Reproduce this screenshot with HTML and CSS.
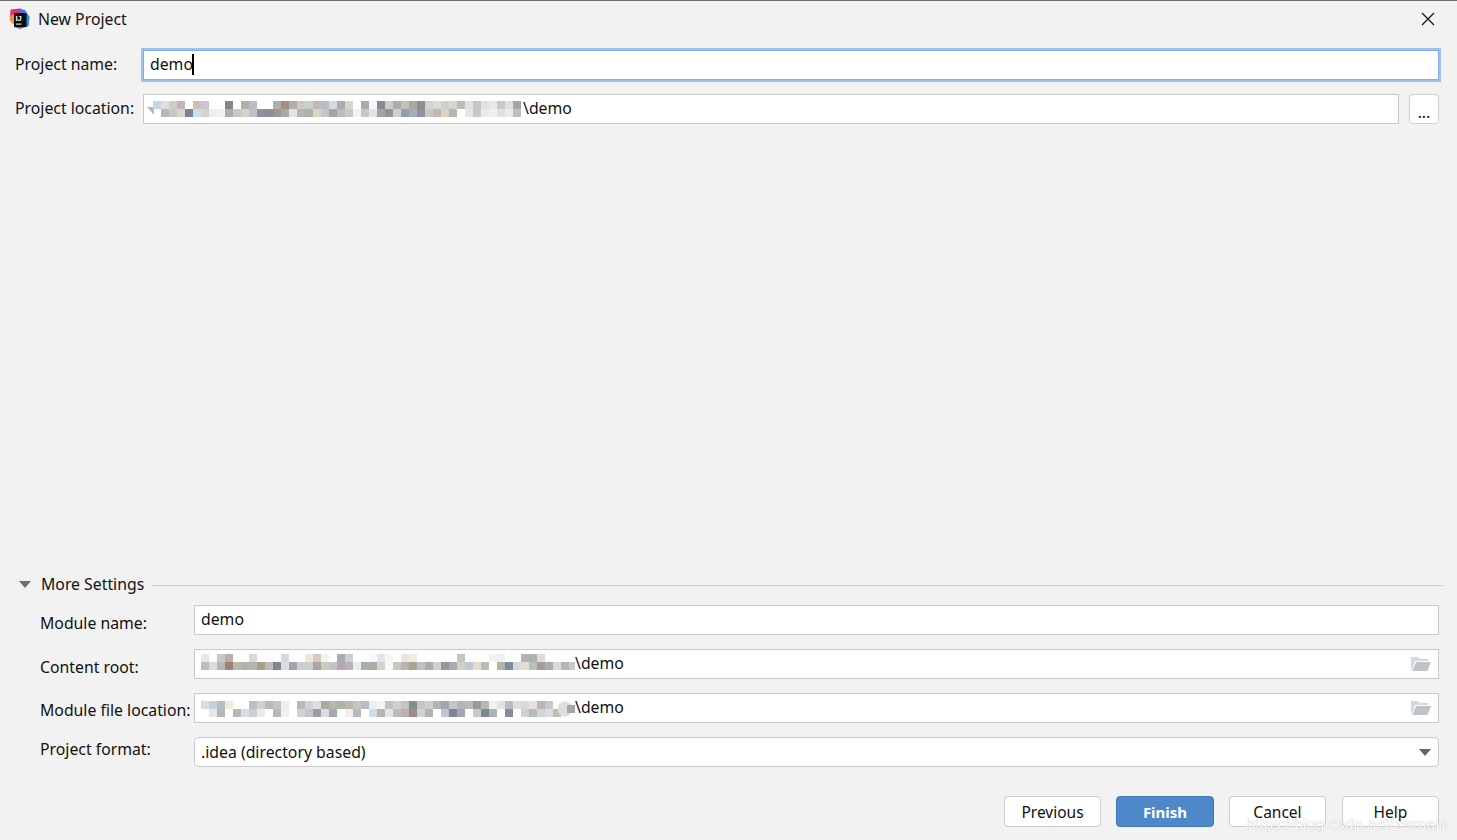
FILE: index.html
```html
<!DOCTYPE html>
<html lang="en">
<head>
<meta charset="utf-8">
<title>New Project</title>
<link rel="stylesheet" href="styles.css">
</head>
<body>
<div class="dialog">
  <header class="titlebar">
    <svg class="app-icon" width="22" height="22" viewBox="0 0 22 22">
      <path d="M2.500 1.500 L13 0.500 L15 8 L6 15 L2 12 Z" fill="#ee2a62"/>
      <path d="M1.500 8 L7 6 L8 17 L3.500 15 Z" fill="#f7931e"/>
      <path d="M10 0.500 L17 2 L21.500 9 L20.500 18 L12 21 L6 19 L12 8 Z" fill="#5b5ff2"/>
      <path d="M16 2 L21.500 9 L20.500 18 L16 19 Z" fill="#2f8ae8"/>
      <rect x="6" y="5" width="12.500" height="14" fill="#0b0b10"/>
      <text class="app-icon-text" x="7.500" y="12.500">IJ</text>
      <rect x="8" y="15.500" width="5.500" height="1.200" fill="#d8d8d8"/>
    </svg>
    <span class="title">New Project</span>
    <svg class="close" width="14" height="14" viewBox="0 0 14 14"><path d="M1 1 L13 13 M13 1 L1 13" stroke="#1c1c1c" stroke-width="1.400" fill="none"/></svg>
  </header>

  <section class="primary">
    <label class="label label-up">Project name:</label>
    <div class="field field-focus">demo<span class="caret"></span></div>
    <label class="label label-up">Project location:</label>
    <div class="location">
      <div class="field field-masked-top">
        <svg class="mosaic" width="376" height="28" viewBox="0 0 376 28">
          <path d="M0 12 L7 12 L7 20 Z" fill="#b5b5b5"/>
          <rect class="px" x="6" y="6" fill="#c5d6e4"/><rect class="px" x="14" y="6" fill="#dde0e6"/><rect class="px" x="22" y="6" fill="#cfcfca"/><rect class="px" x="30" y="6" fill="#c2b5b3"/><rect class="px" x="46" y="6" fill="#cdbfb7"/><rect class="px" x="54" y="6" fill="#c7c6d4"/><rect class="px" x="78" y="6" fill="#888384"/><rect class="px" x="94" y="6" fill="#b1aeaa"/><rect class="px" x="102" y="6" fill="#bfbcc3"/><rect class="px" x="126" y="6" fill="#abb2ae"/><rect class="px" x="134" y="6" fill="#a58f80"/><rect class="px" x="142" y="6" fill="#b5afa7"/><rect class="px" x="150" y="6" fill="#ccc9c3"/><rect class="px" x="158" y="6" fill="#ccd0cc"/><rect class="px" x="166" y="6" fill="#c2b9b2"/><rect class="px" x="174" y="6" fill="#b5bdc3"/><rect class="px" x="182" y="6" fill="#d1dbe3"/><rect class="px" x="190" y="6" fill="#a9adb5"/><rect class="px" x="198" y="6" fill="#d9d5d0"/><rect class="px" x="214" y="6" fill="#a9a9ae"/><rect class="px" x="222" y="6" fill="#f4f6fb"/><rect class="px" x="230" y="6" fill="#8b888f"/><rect class="px" x="238" y="6" fill="#cacacc"/><rect class="px" x="246" y="6" fill="#aeaaa8"/><rect class="px" x="254" y="6" fill="#c3bfba"/><rect class="px" x="262" y="6" fill="#aaa7a2"/><rect class="px" x="270" y="6" fill="#8f8e8b"/><rect class="px" x="278" y="6" fill="#d2d2ca"/><rect class="px" x="286" y="6" fill="#dddcd6"/><rect class="px" x="294" y="6" fill="#cfcfcc"/><rect class="px" x="302" y="6" fill="#d8d4d0"/><rect class="px" x="310" y="6" fill="#bcbcbb"/><rect class="px" x="318" y="6" fill="#dde1e5"/><rect class="px" x="326" y="6" fill="#c5c8c9"/><rect class="px" x="334" y="6" fill="#dfe2de"/><rect class="px" x="342" y="6" fill="#e8e8e8"/><rect class="px" x="350" y="6" fill="#c8c8c8"/><rect class="px" x="358" y="6" fill="#dfe2de"/><rect class="px" x="366" y="6" fill="#a8a5a2"/>
          <rect class="px" x="14" y="14" fill="#b9b8b6"/><rect class="px" x="22" y="14" fill="#c8c9c5"/><rect class="px" x="30" y="14" fill="#d6d6d0"/><rect class="px" x="38" y="14" fill="#77838f"/><rect class="px" x="46" y="14" fill="#cfdde8"/><rect class="px" x="54" y="14" fill="#d2d1cc"/><rect class="px" x="62" y="14" fill="#eceef0"/><rect class="px" x="70" y="14" fill="#f2f2ee"/><rect class="px" x="78" y="14" fill="#a9aeb3"/><rect class="px" x="86" y="14" fill="#c9c8c5"/><rect class="px" x="94" y="14" fill="#d9d2ca"/><rect class="px" x="102" y="14" fill="#bcc2c9"/><rect class="px" x="110" y="14" fill="#8e939f"/><rect class="px" x="118" y="14" fill="#8f8e8f"/><rect class="px" x="126" y="14" fill="#a1978f"/><rect class="px" x="134" y="14" fill="#a6a8ac"/><rect class="px" x="142" y="14" fill="#e3e3ea"/><rect class="px" x="150" y="14" fill="#b7b4b4"/><rect class="px" x="158" y="14" fill="#aeb0ae"/><rect class="px" x="166" y="14" fill="#ddd3c3"/><rect class="px" x="174" y="14" fill="#c4c8cb"/><rect class="px" x="182" y="14" fill="#a6a3a3"/><rect class="px" x="190" y="14" fill="#bdbcb5"/><rect class="px" x="198" y="14" fill="#c9c8c2"/><rect class="px" x="206" y="14" fill="#f2f2f2"/><rect class="px" x="214" y="14" fill="#c6c6c6"/><rect class="px" x="222" y="14" fill="#e4e4e4"/><rect class="px" x="230" y="14" fill="#a8a29f"/><rect class="px" x="238" y="14" fill="#9b938a"/><rect class="px" x="246" y="14" fill="#cdd1d2"/><rect class="px" x="254" y="14" fill="#8f9fae"/><rect class="px" x="262" y="14" fill="#a8adb5"/><rect class="px" x="270" y="14" fill="#8f93a8"/><rect class="px" x="278" y="14" fill="#c9c8c3"/><rect class="px" x="286" y="14" fill="#bcb9bc"/><rect class="px" x="294" y="14" fill="#dfcfc0"/><rect class="px" x="302" y="14" fill="#b9b5ae"/><rect class="px" x="318" y="14" fill="#e6e6e6"/><rect class="px" x="326" y="14" fill="#c9c7bf"/><rect class="px" x="334" y="14" fill="#e8ece8"/><rect class="px" x="342" y="14" fill="#f0f0f0"/><rect class="px" x="350" y="14" fill="#e0e0e0"/><rect class="px" x="358" y="14" fill="#e8ece8"/><rect class="px" x="366" y="14" fill="#c0bfbf"/>
        </svg><span>\demo</span>
      </div>
      <button class="browse" type="button">...</button>
    </div>
  </section>

  <section class="settings">
    <div class="settings-head">
      <svg class="disclosure" width="12" height="8" viewBox="0 0 12 8"><path d="M0 0 H12 L6 7 Z" fill="#6f6f6f"/></svg>
      <span>More Settings</span>
      <span class="rule"></span>
    </div>
    <div class="settings-grid">
      <label class="label label-low">Module name:</label>
      <div class="field field-raised">demo</div>
      <label class="label label-low">Content root:</label>
      <div class="field field-masked field-raised">
        <svg class="mosaic" width="376" height="28" viewBox="0 0 376 28">
          <rect class="px" x="2" y="4" fill="#e5e8ea"/><rect class="px" x="18" y="4" fill="#c9c8c6"/><rect class="px" x="26" y="4" fill="#b8aeaa"/><rect class="px" x="50" y="4" fill="#d5dad8"/><rect class="px" x="82" y="4" fill="#d8d8e0"/><rect class="px" x="106" y="4" fill="#f0e6da"/><rect class="px" x="114" y="4" fill="#d6cac2"/><rect class="px" x="122" y="4" fill="#f7f2ec"/><rect class="px" x="138" y="4" fill="#a9adb5"/><rect class="px" x="146" y="4" fill="#d0d0d0"/><rect class="px" x="170" y="4" fill="#f5f8fc"/><rect class="px" x="178" y="4" fill="#dde6f0"/><rect class="px" x="186" y="4" fill="#f8f6f0"/><rect class="px" x="202" y="4" fill="#e8e4e0"/><rect class="px" x="210" y="4" fill="#f0ebe0"/><rect class="px" x="258" y="4" fill="#c9c4c0"/><rect class="px" x="290" y="4" fill="#f5f0ea"/><rect class="px" x="298" y="4" fill="#eff0f2"/><rect class="px" x="322" y="4" fill="#b5b5b9"/><rect class="px" x="330" y="4" fill="#b3b0a9"/><rect class="px" x="338" y="4" fill="#dedcd7"/>
          <rect class="px" x="2" y="12" fill="#c0bcb8"/><rect class="px" x="10" y="12" fill="#dcdcdc"/><rect class="px" x="18" y="12" fill="#b9b7b4"/><rect class="px" x="26" y="12" fill="#9f8075"/><rect class="px" x="34" y="12" fill="#bbb8b2"/><rect class="px" x="42" y="12" fill="#b3b0ac"/><rect class="px" x="50" y="12" fill="#b5b5b0"/><rect class="px" x="58" y="12" fill="#a99e85"/><rect class="px" x="66" y="12" fill="#b9bcc0"/><rect class="px" x="74" y="12" fill="#7d858f"/><rect class="px" x="82" y="12" fill="#dbe0dd"/><rect class="px" x="90" y="12" fill="#a3a3b0"/><rect class="px" x="98" y="12" fill="#c8ced6"/><rect class="px" x="106" y="12" fill="#cbd0cf"/><rect class="px" x="114" y="12" fill="#a8a7a3"/><rect class="px" x="122" y="12" fill="#cbcbc6"/><rect class="px" x="130" y="12" fill="#c2c3c7"/><rect class="px" x="138" y="12" fill="#b8a8ad"/><rect class="px" x="146" y="12" fill="#b3b4b7"/><rect class="px" x="154" y="12" fill="#eaeee8"/><rect class="px" x="162" y="12" fill="#a6adaf"/><rect class="px" x="170" y="12" fill="#aeaba6"/><rect class="px" x="178" y="12" fill="#d4d3cd"/><rect class="px" x="186" y="12" fill="#fdfbf0"/><rect class="px" x="194" y="12" fill="#c8c5c5"/><rect class="px" x="202" y="12" fill="#b9b5ae"/><rect class="px" x="210" y="12" fill="#a5a694"/><rect class="px" x="218" y="12" fill="#bcc2c7"/><rect class="px" x="226" y="12" fill="#abaeb0"/><rect class="px" x="234" y="12" fill="#cdd0d4"/><rect class="px" x="242" y="12" fill="#9a9698"/><rect class="px" x="250" y="12" fill="#aaaab0"/><rect class="px" x="258" y="12" fill="#ccd2c8"/><rect class="px" x="266" y="12" fill="#c3c9d1"/><rect class="px" x="274" y="12" fill="#e8dcc9"/><rect class="px" x="282" y="12" fill="#bcbcb4"/><rect class="px" x="298" y="12" fill="#b2b3a3"/><rect class="px" x="306" y="12" fill="#7c8c9c"/><rect class="px" x="314" y="12" fill="#d8d8d8"/><rect class="px" x="322" y="12" fill="#e2dfd2"/><rect class="px" x="330" y="12" fill="#b8c0c4"/><rect class="px" x="338" y="12" fill="#a89c98"/><rect class="px" x="346" y="12" fill="#a9acb5"/><rect class="px" x="354" y="12" fill="#dadada"/><rect class="px" x="362" y="12" fill="#b5b5b5"/><rect class="px" x="370" y="12" fill="#c9c9cb"/>
        </svg><span>\demo</span>
        <svg class="folder" width="20" height="14" viewBox="0 0 20 14"><path d="M0 13 V0 H7 L9 2 H17 V4 H4 L1 13 Z" fill="#d3d8dc"/><path d="M5 5 H20 L16.500 14 H1.500 Z" fill="#bcc4ca"/></svg>
      </div>
      <label class="label label-low-small">Module file location:</label>
      <div class="field field-masked field-raised">
        <svg class="mosaic" width="376" height="28" viewBox="0 0 376 28">
          <rect class="px" x="2" y="7" fill="#d8dbe0"/><rect class="px" x="10" y="7" fill="#c5d2dc"/><rect class="px" x="18" y="7" fill="#b8bdc0"/><rect class="px" x="26" y="7" fill="#f5ead9"/><rect class="px" x="50" y="7" fill="#b9c1c4"/><rect class="px" x="58" y="7" fill="#ced0d3"/><rect class="px" x="66" y="7" fill="#b5bbb8"/><rect class="px" x="74" y="7" fill="#c3c7c4"/><rect class="px" x="82" y="7" fill="#f2ece8"/><rect class="px" x="98" y="7" fill="#c0b5b5"/><rect class="px" x="106" y="7" fill="#d0d0d5"/><rect class="px" x="114" y="7" fill="#dcdce4"/><rect class="px" x="122" y="7" fill="#aaa89f"/><rect class="px" x="130" y="7" fill="#b6b8b0"/><rect class="px" x="138" y="7" fill="#a9b3a9"/><rect class="px" x="146" y="7" fill="#bfb5ab"/><rect class="px" x="154" y="7" fill="#cac2bd"/><rect class="px" x="162" y="7" fill="#babcc4"/><rect class="px" x="170" y="7" fill="#e8eef5"/><rect class="px" x="178" y="7" fill="#f6f4ee"/><rect class="px" x="186" y="7" fill="#c2c2c6"/><rect class="px" x="194" y="7" fill="#d0d0d0"/><rect class="px" x="202" y="7" fill="#c5c5b8"/><rect class="px" x="210" y="7" fill="#7f8f8e"/><rect class="px" x="218" y="7" fill="#c5c5c5"/><rect class="px" x="226" y="7" fill="#cfcfd0"/><rect class="px" x="234" y="7" fill="#b0b3b5"/><rect class="px" x="242" y="7" fill="#a3a5a8"/><rect class="px" x="250" y="7" fill="#c4c6cc"/><rect class="px" x="258" y="7" fill="#b3b5b5"/><rect class="px" x="266" y="7" fill="#bcbab3"/><rect class="px" x="274" y="7" fill="#9a9996"/><rect class="px" x="282" y="7" fill="#b5b9b4"/><rect class="px" x="290" y="7" fill="#f0f0f0"/><rect class="px" x="298" y="7" fill="#e0e4e6"/><rect class="px" x="306" y="7" fill="#c0bbb7"/><rect class="px" x="314" y="7" fill="#dedede"/><rect class="px" x="322" y="7" fill="#dadada"/><rect class="px" x="330" y="7" fill="#e5e0dc"/><rect class="px" x="338" y="7" fill="#b9b6b6"/><rect class="px" x="346" y="7" fill="#c8c8c8"/>
          <rect class="px" x="10" y="15" fill="#e8e8e4"/><rect class="px" x="18" y="15" fill="#b5b8ba"/><rect class="px" x="34" y="15" fill="#b9b9b9"/><rect class="px" x="42" y="15" fill="#d0e0ec"/><rect class="px" x="50" y="15" fill="#cdcdca"/><rect class="px" x="58" y="15" fill="#e8ecee"/><rect class="px" x="74" y="15" fill="#b9b9b9"/><rect class="px" x="82" y="15" fill="#f0f0f0"/><rect class="px" x="98" y="15" fill="#d2d2d4"/><rect class="px" x="106" y="15" fill="#c5c5c9"/><rect class="px" x="114" y="15" fill="#9a9ea9"/><rect class="px" x="122" y="15" fill="#dcdcdc"/><rect class="px" x="130" y="15" fill="#a2a8b4"/><rect class="px" x="146" y="15" fill="#eeeeee"/><rect class="px" x="154" y="15" fill="#b9b9b9"/><rect class="px" x="170" y="15" fill="#cfdde9"/><rect class="px" x="178" y="15" fill="#b5b5bb"/><rect class="px" x="186" y="15" fill="#e5e5e5"/><rect class="px" x="194" y="15" fill="#bcbaba"/><rect class="px" x="202" y="15" fill="#b8b2a8"/><rect class="px" x="210" y="15" fill="#9a8c82"/><rect class="px" x="218" y="15" fill="#cfd3d9"/><rect class="px" x="226" y="15" fill="#aeb5b6"/><rect class="px" x="242" y="15" fill="#bcc6d2"/><rect class="px" x="250" y="15" fill="#7d8595"/><rect class="px" x="258" y="15" fill="#a2a8b2"/><rect class="px" x="274" y="15" fill="#c9c9c9"/><rect class="px" x="282" y="15" fill="#7c8796"/><rect class="px" x="290" y="15" fill="#a9b5b1"/><rect class="px" x="306" y="15" fill="#7f8d9f"/><rect class="px" x="322" y="15" fill="#cfd0d0"/><rect class="px" x="330" y="15" fill="#b5bcbe"/><rect class="px" x="338" y="15" fill="#cfd3db"/><rect class="px" x="346" y="15" fill="#dcdde6"/><rect class="px" x="354" y="15" fill="#c0bcb8"/>
          <circle cx="366" cy="15" r="7.500" fill="#e0dedc"/><rect class="px" x="368" y="11" fill="#a8a5a2"/>
        </svg><span>\demo</span>
        <svg class="folder" width="20" height="14" viewBox="0 0 20 14"><path d="M0 13 V0 H7 L9 2 H17 V4 H4 L1 13 Z" fill="#d3d8dc"/><path d="M5 5 H20 L16.500 14 H1.500 Z" fill="#bcc4ca"/></svg>
      </div>
      <label class="label label-high">Project format:</label>
      <div class="field field-select">
        <span>.idea (directory based)</span>
        <svg class="arrow" width="12" height="7" viewBox="0 0 12 7"><path d="M0 0 H12 L6 7 Z" fill="#666"/></svg>
      </div>
    </div>
  </section>

  <footer class="actions">
    <button class="btn" type="button">Previous</button>
    <button class="btn btn-primary" type="button">Finish</button>
    <button class="btn" type="button">Cancel</button>
    <button class="btn btn-last" type="button">Help</button>
  </footer>
  <div class="watermark">https://blog.csdn.net/zwmain</div>
</div>
</body>
</html>
```

FILE: styles.css
```css
* { box-sizing: border-box; }

html, body {
  margin: 0;
  height: 100%;
}

body {
  background: #f2f2f2;
  color: #111;
  font-family: "Noto Sans", "Open Sans", sans-serif;
  font-size: 15.800px;
  overflow: hidden;
}

.dialog {
  position: relative;
  height: 840px;
  display: flex;
  flex-direction: column;
  border-top: 1px solid #6f6f6f;
}

.titlebar {
  height: 36px;
  flex: none;
  display: flex;
  align-items: center;
  padding: 0 22px 0 8px;
}

.app-icon { flex: none; }

.app-icon-text {
  font-family: "Liberation Sans", sans-serif;
  font-size: 7.500px;
  font-weight: 700;
  fill: #fff;
}

.title {
  margin-left: 8px;
  flex: 1;
}

.primary {
  display: grid;
  grid-template-columns: 128px 1fr;
  row-gap: 14px;
  align-items: center;
  padding: 13px 18px 0 15px;
}

.label {
  white-space: nowrap;
  line-height: 20px;
}

.label-up { padding-bottom: 2px; }

.field {
  height: 30px;
  display: flex;
  align-items: center;
  padding: 0 6px;
  background: #fff;
  border: 1px solid #c8c8c8;
  line-height: 20px;
  white-space: nowrap;
}

.field-focus {
  border-color: #7fb0ea;
  box-shadow: 0 0 0 2px #9cc3ef;
  padding-bottom: 2px;
}

.caret {
  width: 2px;
  height: 21px;
  margin-left: -1px;
  background: #000;
}

.field-masked-top { flex: 1; padding: 0 0 2px 3px; }
.field-masked { padding: 0 6px 2px 4px; }
.field-raised { padding-bottom: 2px; }

.mosaic { flex: none; filter: blur(0.4px); margin-bottom: -2px; }
.px { width: 8px; height: 8px; }

.location {
  display: flex;
  gap: 10px;
}

.browse {
  flex: none;
  width: 30px;
  height: 30px;
  padding: 6px 0 0;
  background: #fff;
  border: 1px solid #cfcfcf;
  border-radius: 4px;
  font: inherit;
  line-height: 20px;
  color: #111;
}

.settings { margin-top: auto; }

.settings-head {
  display: flex;
  align-items: center;
  padding: 0 14px 0 19px;
  height: 20px;
}

.disclosure { margin: 2px 10px 0 0; }

.rule {
  flex: 1;
  height: 1px;
  margin: 2px 0 0 8px;
  background: #d2d2d2;
}

.settings-grid {
  display: grid;
  grid-template-columns: 154px 1fr;
  row-gap: 14px;
  align-items: center;
  padding: 11px 18px 0 40px;
}

.label-low { padding-top: 6px; }
.label-low-small { padding-top: 4px; }
.label-high { padding-bottom: 6px; }

.field-select {
  justify-content: space-between;
  border-radius: 4px;
  padding-right: 7px;
}

.folder { margin: 2px 1px 0 auto; }

.actions {
  display: flex;
  justify-content: flex-end;
  gap: 15px;
  padding: 29px 18px 0 0;
  margin-bottom: 13px;
}

.btn {
  width: 97px;
  height: 31px;
  padding: 0;
  background: #fff;
  border: 1px solid #cdcdcd;
  border-radius: 4px;
  font: inherit;
  font-size: 15.500px;
  color: #111;
}

.btn-primary {
  width: 98px;
  background: #4e88c9;
  border-color: #4077b8;
  color: #fff;
  font-size: 15px;
  font-weight: 700;
}

.btn-last { margin-left: 1px; }

.watermark {
  position: absolute;
  right: 9px;
  bottom: 6px;
  font-family: "Liberation Sans", sans-serif;
  font-size: 16px;
  color: #fff;
  text-shadow: 0 0 1px #888;
  opacity: 0.85;
}
```
